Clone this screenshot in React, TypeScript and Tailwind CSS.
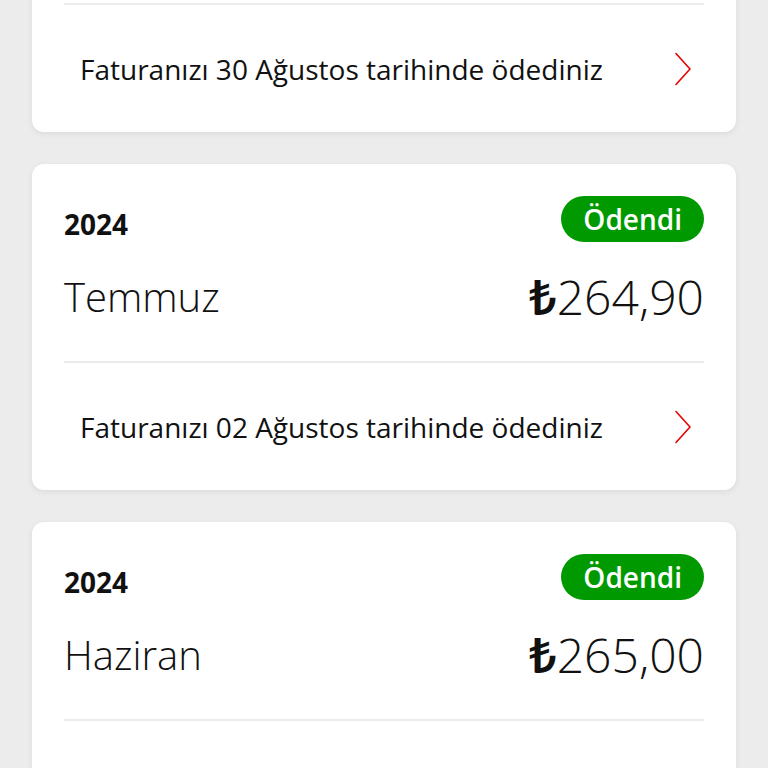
import React from "react";

interface Bill {
  year: string;
  month: string;
  amount: string;
  paidText: string;
}

const bills: Bill[] = [
  { year: "2024", month: "Ağustos", amount: "264,90", paidText: "Faturanızı 30 Ağustos tarihinde ödediniz" },
  { year: "2024", month: "Temmuz", amount: "264,90", paidText: "Faturanızı 02 Ağustos tarihinde ödediniz" },
  { year: "2024", month: "Haziran", amount: "265,00", paidText: "Faturanızı 03 Temmuz tarihinde ödediniz" },
];

const Chevron = () => (
  <svg width="18" height="34" viewBox="0 0 18 34" fill="none" className="shrink-0">
    <path d="M2 1.5 L16 17 L2 32.5" stroke="#e60000" strokeWidth="1.6" strokeLinecap="round" strokeLinejoin="round" />
  </svg>
);

const BillCard: React.FC<{ bill: Bill }> = ({ bill }) => (
  <div className="bg-white rounded-xl shadow-[0_2px_6px_rgba(0,0,0,0.07)] px-8 pt-8">
    <div className="flex justify-between items-start">
      <span className="mt-[12px] text-[28px] leading-[32px] font-bold text-[#111]">{bill.year}</span>
      <span className="h-[46px] px-[22px] rounded-full bg-[#009a00] text-white text-[28px] font-semibold leading-[46px]">
        Ödendi
      </span>
    </div>
    <div className="mt-[31px] mb-[40px] flex justify-between items-center text-[#111] leading-[48px]">
      <span className="text-[40px] font-light">{bill.month}</span>
      <span className="text-[48px] font-light">
        <span className="font-semibold">₺</span>
        {bill.amount}
      </span>
    </div>
    <div className="h-[2px] bg-[#ebebeb]" />
    <div className="h-[127px] flex items-center justify-between pl-4 pr-3">
      <span className="text-[28px] text-[#111] [font-stretch:90%]">{bill.paidText}</span>
      <Chevron />
    </div>
  </div>
);

export default function App() {
  return (
    <div className="min-h-screen bg-[#ececec] overflow-hidden [font-family:'Open_Sans','Noto_Sans',sans-serif]">
      <div className="-mt-[194px] px-8 pb-8 flex flex-col gap-8">
        {bills.map((b, i) => (
          <BillCard key={i} bill={b} />
        ))}
      </div>
    </div>
  );
}
